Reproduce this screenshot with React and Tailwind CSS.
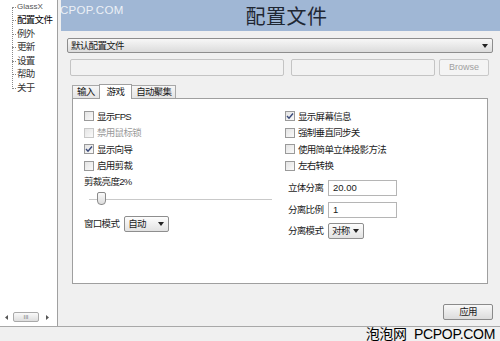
import { useState } from "react";

const font = "font-['Liberation_Sans','Noto_Sans_CJK_SC',sans-serif]";

const treeItems = ["配置文件", "例外", "更新", "设置", "帮助", "关于"];

const Check = ({ label, checked, disabled }) => (
  <div className="flex items-center h-[16.5px] gap-[3px]">
    <span
      className={`w-[10px] h-[10px] border flex items-center justify-center bg-gradient-to-br from-[#e4e4e4] to-[#fafafa] ${
        disabled ? "border-[#c8c8c8]" : "border-[#9a9a9a]"
      }`}
    >
      {checked && (
        <svg width="8" height="8" viewBox="0 0 8 8">
          <path d="M1 4 L3 6.2 L7 1.5" stroke="#3a4a7a" strokeWidth="1.4" fill="none" />
        </svg>
      )}
    </span>
    <span className={disabled ? "text-[#9a9a9a]" : "text-[#1a1a1a]"}>{label}</span>
  </div>
);

const Select = ({ value, width }) => (
  <div
    className={`${width} h-[16px] border border-[#8e8e8e] rounded-[2px] bg-gradient-to-b from-[#fdfdfd] to-[#e2e2e2] flex items-center justify-between pl-[3px] pr-[4px]`}
  >
    <span>{value}</span>
    <svg width="6" height="4" viewBox="0 0 6 4">
      <path d="M0 0 H6 L3 4 Z" fill="#222" />
    </svg>
  </div>
);

const App = () => {
  const [tab] = useState("游戏");

  return (
    <div className={`w-[500px] h-[341px] bg-[#f0f0f0] flex flex-col overflow-hidden text-[9.5px] tracking-[-0.7px] leading-none whitespace-nowrap text-[#1a1a1a] ${font}`}>
      <div className="flex h-[326px]">
        {/* tree */}
        <div className="w-[58px] bg-white border-r border-[#a0a0a0] flex flex-col justify-between">
          <div className="relative pt-[1px] pl-[17px]">
            <div className="absolute left-[12px] top-[8px] h-[81px] border-l border-dotted border-[#8a8a8a]" />
            <div className="h-[12px] flex items-center text-[8px] tracking-normal text-[#555] relative">
              <span className="absolute left-[-5px] top-[6px] w-[4px] border-t border-dotted border-[#8a8a8a]" />
              GlassX
            </div>
            {treeItems.map((t, i) => (
              <div key={t} className={`h-[13.6px] flex items-center relative ${i === 0 ? "text-black" : "text-[#333]"}`}>
                <span className="absolute left-[-5px] top-[7px] w-[4px] border-t border-dotted border-[#8a8a8a]" />
                {t}
              </div>
            ))}
          </div>
          <div className="h-[12px] mb-[3px] flex items-center px-[5px] gap-[5px]">
            <svg width="3" height="5" viewBox="0 0 3 5"><path d="M3 0 V5 L0 2.5 Z" fill="#555" /></svg>
            <div className="w-[26px] h-[10px] border border-[#a9a9a9] rounded-[2px] bg-gradient-to-b from-[#fafafa] to-[#dedede] flex items-center justify-center text-[6px] tracking-normal text-[#777]">
              III
            </div>
            <svg className="ml-[2px]" width="3" height="5" viewBox="0 0 3 5"><path d="M0 0 V5 L3 2.5 Z" fill="#555" /></svg>
          </div>
        </div>

        {/* main */}
        <div className="flex-1 ml-[3px] flex flex-col">
          <div className="h-[31px] bg-[#a0b7d5] relative flex items-center justify-center">
            <span className="absolute left-[-1px] top-[5px] text-white text-[11.5px] tracking-[0.3px] font-['Liberation_Sans',sans-serif] opacity-80">
              CPOP.COM
            </span>
            <span className="text-[20px] text-[#1f2733] font-['Noto_Sans_CJK_SC',sans-serif] tracking-[0.5px] ml-[12px]">
              配置文件
            </span>
          </div>

          <div className="flex-1 flex flex-col pl-[6px] pr-[7px] pt-[7px]">
            <div className="h-[15px] border border-[#8d8d8d] rounded-[2px] bg-gradient-to-b from-[#f7f7f7] to-[#dcdcdc] flex items-center justify-between pl-[3px] pr-[4px]">
              <span>默认配置文件</span>
              <svg width="6" height="4" viewBox="0 0 6 4"><path d="M0 0 H6 L3 4 Z" fill="#222" /></svg>
            </div>

            <div className="flex mt-[6px] ml-[3px] gap-[7px] h-[17px]">
              <div className="w-[214px] border border-[#c4c4c4] rounded-[2px] bg-[#f2f2f2]" />
              <div className="w-[144px] border border-[#c4c4c4] rounded-[2px] bg-[#f2f2f2]" />
              <div className="w-[50px] -ml-[3px] border border-[#c9c9c9] rounded-[2px] bg-[#f4f4f4] flex items-center justify-center text-[#a0a0a0] text-[9px] tracking-normal">
                Browse
              </div>
            </div>

            <div className="flex items-end ml-[6px] mt-[7px] h-[15px]">
              {["输入", "游戏", "自动聚集"].map((t) => (
                <div
                  key={t}
                  className={
                    t === tab
                      ? "h-[15px] px-[7px] bg-white border border-b-0 border-[#9f9f9f] flex items-center relative top-[1px] z-10"
                      : "h-[13px] px-[4px] bg-gradient-to-b from-[#f6f6f6] to-[#e4e4e4] border border-b-0 border-[#a8a8a8] flex items-center mx-[-1px]"
                  }
                >
                  {t}
                </div>
              ))}
            </div>

            <div className="ml-[5px] mr-[5px] h-[186px] bg-white border border-[#9f9f9f] flex pl-[11px] pt-[9px]">
              <div className="w-[201px] flex flex-col">
                <Check label="显示FPS" />
                <Check label="禁用鼠标锁" disabled />
                <Check label="显示向导" checked />
                <Check label="启用剪裁" />
                <div className="h-[16px] flex items-center">剪裁亮度2%</div>
                <div className="relative h-[15px] mt-[2px] ml-[5px] w-[183px]">
                  <div className="absolute left-0 right-0 top-[7px] border-t border-[#c9c9c9]" />
                  <div className="absolute left-[8px] top-0 w-[9px] h-[13px] rounded-b-[4px] rounded-t-[2px] border border-[#8a8a8a] bg-gradient-to-b from-[#fafafa] to-[#dcdcdc]" />
                </div>
                <div className="flex items-center gap-[5px] mt-[9px]">
                  <span>窗口模式</span>
                  <Select value="自动" width="w-[45px]" />
                </div>
              </div>
              <div className="flex flex-col">
                <Check label="显示屏幕信息" checked />
                <Check label="强制垂直同步关" />
                <Check label="使用简单立体投影方法" />
                <Check label="左右转换" />
                <div className="flex items-center mt-[6px] ml-[3px]">
                  <span className="w-[40px]">立体分离</span>
                  <div className="w-[69px] h-[16px] border border-[#b5b5b5] flex items-center pl-[4px] text-[9.5px] tracking-normal">20.00</div>
                </div>
                <div className="flex items-center mt-[6px] ml-[3px]">
                  <span className="w-[40px]">分离比例</span>
                  <div className="w-[69px] h-[16px] border border-[#b5b5b5] flex items-center pl-[4px] text-[9.5px] tracking-normal">1</div>
                </div>
                <div className="flex items-center mt-[5px] ml-[3px]">
                  <span className="w-[40px]">分离模式</span>
                  <Select value="对称" width="w-[36px]" />
                </div>
              </div>
            </div>

            <div className="flex justify-end mt-[20px]">
              <div className="w-[50px] h-[16px] border border-[#8a8a8a] rounded-[2px] bg-gradient-to-b from-[#f8f8f8] to-[#dcdcdc] flex items-center justify-center">
                应用
              </div>
            </div>
          </div>
        </div>
      </div>

      <div className="flex-1 border-t border-[#a8a8a8] flex items-center justify-end pr-[5px]">
        <span className="text-[14px] text-black tracking-[-0.3px]">
          泡泡网&nbsp;&nbsp;PCPOP.COM
        </span>
      </div>
    </div>
  );
};

export default App;
